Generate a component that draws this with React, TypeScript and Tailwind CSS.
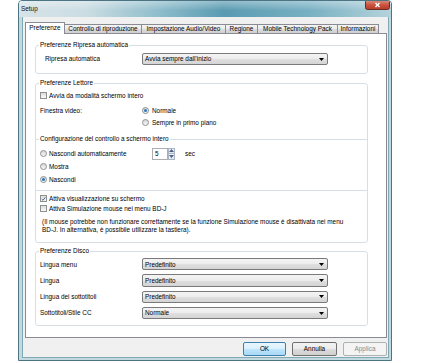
import React from "react";

function TitleBar({ title }: { title: string }) {
  return (
    <svg width="372" height="16" viewBox="0 0 372 16" className="block shrink-0">
      <defs>
        <linearGradient id="glass" x1="0" y1="0" x2="1" y2="0">
          <stop offset="0" stopColor="#d6e3e8" />
          <stop offset="0.18" stopColor="#cbdde3" />
          <stop offset="0.38" stopColor="#8dbccb" />
          <stop offset="0.55" stopColor="#5a9bb2" />
          <stop offset="0.78" stopColor="#78b0c2" />
          <stop offset="1" stopColor="#b4d3dc" />
        </linearGradient>
        <linearGradient id="sheen" x1="0" y1="0" x2="0" y2="1">
          <stop offset="0" stopColor="#ffffff" stopOpacity="0.35" />
          <stop offset="0.6" stopColor="#ffffff" stopOpacity="0" />
        </linearGradient>
        <linearGradient id="close" x1="0" y1="0" x2="0" y2="1">
          <stop offset="0" stopColor="#e09a8c" />
          <stop offset="0.55" stopColor="#c9533f" />
          <stop offset="1" stopColor="#b83a26" />
        </linearGradient>
      </defs>
      <rect x="0" y="0" width="372" height="16" fill="url(#glass)" />
      <rect x="0" y="0" width="372" height="16" fill="url(#sheen)" />
      <text x="2" y="10" fontFamily="Liberation Sans, Arial, sans-serif" fontSize="6.4" fill="#111">
        {title}
      </text>
      <rect x="346.5" y="-1.5" width="24" height="10" rx="2" fill="url(#close)" stroke="#6d2a21" />
      <path d="M356.5 2 L360.5 6 M360.5 2 L356.5 6" stroke="#fff" strokeWidth="1.4" />
    </svg>
  );
}

function Radio({ checked = false }: { checked?: boolean }) {
  return (
    <span className="flex h-[7px] w-[7px] shrink-0 items-center justify-center rounded-full border border-[#8f9090] bg-[linear-gradient(#d6d6d6,#f8f8f8)]">
      {checked && <span className="h-[3px] w-[3px] rounded-full bg-[#2a78c0]" />}
    </span>
  );
}

function Check({ checked = false }: { checked?: boolean }) {
  return (
    <span className="flex h-[7px] w-[7px] shrink-0 items-center justify-center border border-[#8f9090] bg-[linear-gradient(#dcdcdc,#fafafa)]">
      {checked && (
        <svg viewBox="0 0 7 7" className="h-[6px] w-[6px]">
          <path d="M1 3.6 L2.8 5.4 L6 1.2" fill="none" stroke="#2a4f8a" strokeWidth="1.2" />
        </svg>
      )}
    </span>
  );
}

function Arrow({ up = false, color = "#000" }: { up?: boolean; color?: string }) {
  return (
    <svg viewBox="0 0 5 3" className="h-[3px] w-[5px]">
      <polygon points={up ? "0,3 5,3 2.5,0" : "0,0 5,0 2.5,3"} fill={color} />
    </svg>
  );
}

function Combo({ value }: { value: string }) {
  return (
    <div className="flex h-full w-[186px] items-center justify-between rounded-[2px] border border-[#7a7a7a] bg-[linear-gradient(#f4f4f4,#ececec_50%,#e0e0e0_51%,#d4d4d4)] pl-[2px] pr-[3px]">
      <span>{value}</span>
      <Arrow />
    </div>
  );
}

function Group({
  title,
  className = "",
  children,
}: {
  title: string;
  className?: string;
  children: React.ReactNode;
}) {
  return (
    <fieldset className={`ml-[9px] w-[333px] rounded-[3px] border border-[#d5dfe5] ${className}`}>
      <legend className="ml-[3px] px-[1px] leading-[8px]">{title}</legend>
      {children}
    </fieldset>
  );
}

const tabs = [
  { label: "Controllo di riproduzione", w: "w-[78px]" },
  { label: "Impostazione Audio/Video", w: "w-[85px]" },
  { label: "Regione", w: "w-[33px]" },
  { label: "Mobile Technology Pack", w: "w-[81px]" },
  { label: "Informazioni", w: "w-[42px]" },
];

const disco = [
  { label: "Lingua menu", value: "Predefinito" },
  { label: "Lingua", value: "Predefinito" },
  { label: "Lingua dei sottotitoli", value: "Predefinito" },
  { label: "Sottotitoli/Stile CC", value: "Normale" },
];

export default function App() {
  return (
    <div className="h-[363px] w-[433px] overflow-hidden bg-white font-['Liberation_Sans',Arial,sans-serif] text-[6.4px] text-black">
      <div className="ml-[18px] flex h-[361px] w-[374px] flex-col overflow-hidden rounded-t-[4px] border border-[#4d7482]">
        <TitleBar title="Setup" />

        <div className="flex flex-1 flex-col border-b-[2px] border-l-[3px] border-r-[2px] border-[#c3d9e0]">
          <div className="flex flex-1 flex-col border border-t-0 border-[#7fa9b5] bg-[#f0f0f0] pl-[2px] pr-[1px] pt-[5px]">
            <div className="flex h-[11px] items-end">
              <div className="relative z-10 -mb-[1px] flex h-[12px] w-[40px] items-center justify-center border border-b-0 border-[#898c95] bg-white pb-[1px]">
                Preferenze
              </div>
              {tabs.map((t) => (
                <div
                  key={t.label}
                  className={`-ml-[1px] flex h-[9px] ${t.w} items-center justify-center border border-b-0 border-[#898c95] bg-[linear-gradient(#f3f3f3,#ebebeb_50%,#dddddd_51%,#cfcfcf)] whitespace-nowrap`}
                >
                  {t.label}
                </div>
              ))}
            </div>

            <div className="h-[305px] w-[362px] border border-[#898c95] bg-white pt-[7px]">
              <Group title="Preferenze Ripresa automatica">
                <div className="mb-[8px] mt-[4px] flex h-[12px] items-center pl-[9px]">
                  <span className="w-[97px]">Ripresa automatica</span>
                  <Combo value="Avvia sempre dall’inizio" />
                </div>
              </Group>

              <Group title="Preferenze Lettore" className="mt-[5px]">
                <div className="mt-[4px] flex h-[9px] items-center gap-[2px] pl-[4px]">
                  <Check />
                  <span>Avvia da modalità schermo intero</span>
                </div>
                <div className="mt-[6px] flex h-[9px] items-center pl-[4px]">
                  <span className="w-[102px]">Finestra video:</span>
                  <Radio checked />
                  <span className="ml-[3px]">Normale</span>
                </div>
                <div className="mt-[3px] flex h-[9px] items-center pl-[106px]">
                  <Radio />
                  <span className="ml-[3px]">Sempre in primo piano</span>
                </div>

                <div className="mt-[8px] flex h-[8px] items-center">
                  <span className="h-px w-[3px] bg-[#d5dfe5]" />
                  <span className="px-[1px]">Configurazione del controllo a schermo intero</span>
                  <span className="h-px flex-1 bg-[#d5dfe5]" />
                </div>
                <div className="mt-[6px] flex h-[9px] items-center pl-[4px]">
                  <div className="flex w-[112px] items-center gap-[2px]">
                    <Radio />
                    <span>Nascondi automaticamente</span>
                  </div>
                  <div className="flex h-[12px]">
                    <div className="flex w-[16px] items-center border border-[#abadb3] bg-white pl-[2px]">5</div>
                    <div className="flex w-[7px] flex-col">
                      <span className="flex flex-1 items-center justify-center border border-[#a9b5c2] bg-[linear-gradient(#f4f7fa,#dfe6ee)]">
                        <Arrow up color="#4d6185" />
                      </span>
                      <span className="-mt-px flex flex-1 items-center justify-center border border-[#a9b5c2] bg-[linear-gradient(#f4f7fa,#dfe6ee)]">
                        <Arrow color="#4d6185" />
                      </span>
                    </div>
                  </div>
                  <span className="ml-[10px]">sec</span>
                </div>
                <div className="mt-[4px] flex h-[9px] items-center gap-[2px] pl-[4px]">
                  <Radio />
                  <span>Mostra</span>
                </div>
                <div className="mt-[4px] flex h-[9px] items-center gap-[2px] pl-[4px]">
                  <Radio checked />
                  <span>Nascondi</span>
                </div>
                <div className="mt-[6px] h-px bg-[#d5dfe5]" />

                <div className="mt-[3px] flex h-[9px] items-center gap-[2px] pl-[4px]">
                  <Check checked />
                  <span>Attiva visualizzazione su schermo</span>
                </div>
                <div className="mt-[1px] flex h-[9px] items-center gap-[2px] pl-[4px]">
                  <Check />
                  <span>Attiva Simulazione mouse nei menu BD-J</span>
                </div>
                <p className="mb-[9px] mt-[5px] pl-[6px] leading-[7.6px] whitespace-nowrap">
                  (Il mouse potrebbe non funzionare correttamente se la funzione Simulazione mouse è disattivata nei menu
                  <br />
                  BD-J. In alternativa, è possibile utilizzare la tastiera).
                </p>
              </Group>

              <Group title="Preferenze Disco" className="mt-[4px]">
                <div className="mb-[6px] mt-[3px] flex flex-col gap-[4px] pl-[4px]">
                  {disco.map((d) => (
                    <div key={d.label} className="flex h-[12.3px] items-center">
                      <span className="w-[102px]">{d.label}</span>
                      <Combo value={d.value} />
                    </div>
                  ))}
                </div>
              </Group>
            </div>

            <div className="mt-[4px] flex h-[14px] justify-end gap-[6px]">
              <button className="flex w-[43px] items-center justify-center rounded-[2px] border border-[#3c7fb1] bg-[linear-gradient(#eaf6fd,#d9f0fc_50%,#bee6fd_51%,#a7d9f5)]">
                OK
              </button>
              <button className="flex w-[45px] items-center justify-center rounded-[2px] border border-[#707070] bg-[linear-gradient(#f2f2f2,#ebebeb_50%,#dddddd_51%,#cfcfcf)]">
                Annulla
              </button>
              <button className="flex w-[44px] items-center justify-center rounded-[2px] border border-[#adb2b5] bg-[#f4f4f4] text-[#8a8a8a]">
                Applica
              </button>
            </div>
          </div>
        </div>
      </div>
    </div>
  );
}
